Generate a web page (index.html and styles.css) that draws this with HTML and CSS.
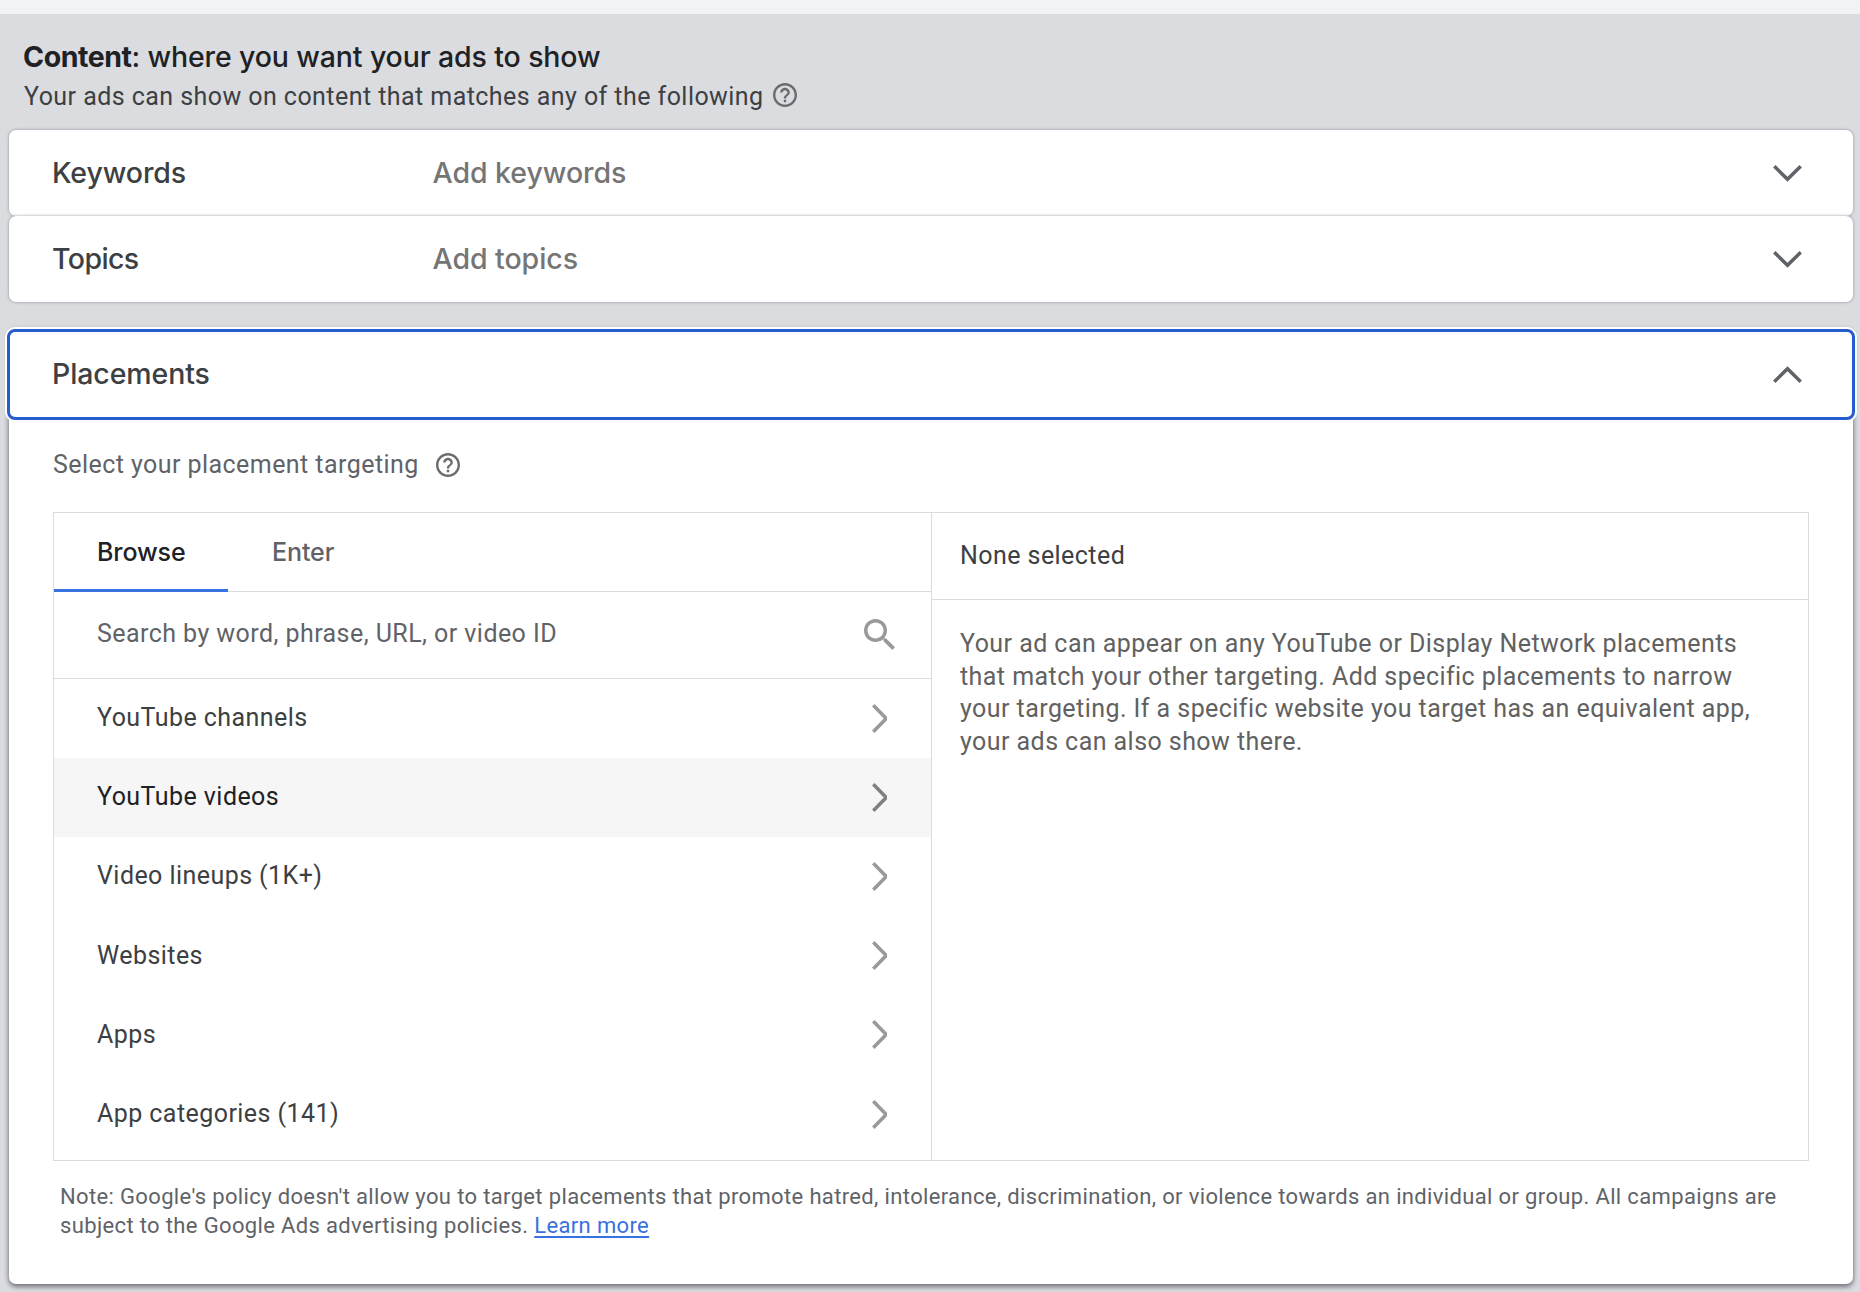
FILE: index.html
```html
<!DOCTYPE html>
<html lang="en">
<head>
<meta charset="utf-8">
<title>Content targeting</title>
<link rel="stylesheet" href="styles.css">
</head>
<body>
<svg class="defs" width="0" height="0" aria-hidden="true">
  <symbol id="help" viewBox="2 2 20 20"><path d="M11 18h2v-2h-2v2zm1-16C6.48 2 2 6.48 2 12s4.480 10 10 10 10-4.480 10-10S17.520 2 12 2zm0 18c-4.410 0-8-3.590-8-8s3.590-8 8-8 8 3.590 8 8-3.590 8-8 8zm0-14c-2.210 0-4 1.790-4 4h2c0-1.100.9-2 2-2s2 .9 2 2c0 2-3 1.750-3 5h2c0-2.250 3-2.500 3-5 0-2.210-1.790-4-4-4z"/></symbol>
  <symbol id="search" viewBox="3 3 17.490 17.490"><path d="M15.500 14h-.79l-.28-.27C15.410 12.590 16 11.110 16 9.500 16 5.910 13.090 3 9.500 3S3 5.910 3 9.500 5.910 16 9.500 16c1.610 0 3.090-.59 4.230-1.570l.27.28v.79l5 4.990L20.490 19l-4.990-5zm-6 0C7.010 14 5 11.990 5 9.500S7.010 5 9.500 5 14 7.010 14 9.500 11.990 14 9.500 14z"/></symbol>
  <symbol id="down" viewBox="0 0 29 17"><path d="M1.300 1.300 14.500 14.300 27.700 1.300" fill="none" stroke="currentColor" stroke-width="3.500"/></symbol>
  <symbol id="up" viewBox="0 0 29 17"><path d="M1.300 15.700 14.500 2.700 27.700 15.700" fill="none" stroke="currentColor" stroke-width="3.500"/></symbol>
  <symbol id="next" viewBox="0 0 15 29"><path d="M1.300 1.300 14.200 14.500 1.300 27.700" fill="none" stroke="currentColor" stroke-width="3.500"/></symbol>
</svg>

<main class="page">
  <header class="intro">
    <h1 class="title"><b>Content</b>: where you want your ads to show</h1>
    <p class="subtitle"><span>Your ads can show on content that matches any of the following</span><svg class="help"><use href="#help"/></svg></p>
  </header>

  <section class="card row">
    <span class="name">Keywords</span><span class="hint">Add keywords</span>
    <svg class="arrow"><use href="#down"/></svg>
  </section>
  <section class="card row">
    <span class="name topics">Topics</span><span class="hint">Add topics</span>
    <svg class="arrow"><use href="#down"/></svg>
  </section>

  <section class="placements">
    <div class="focus row">
      <span class="name">Placements</span>
      <svg class="arrow"><use href="#up"/></svg>
    </div>
    <p class="prompt"><span>Select your placement targeting</span><svg class="help"><use href="#help"/></svg></p>

    <div class="picker">
      <div class="browse">
        <nav class="tabs"><span class="tab active">Browse</span><span class="tab">Enter</span></nav>
        <div class="search"><span>Search by word, phrase, URL, or video ID</span><svg class="glass"><use href="#search"/></svg></div>
        <ul class="list">
          <li>YouTube channels<svg class="next"><use href="#next"/></svg></li>
          <li class="hover">YouTube videos<svg class="next"><use href="#next"/></svg></li>
          <li>Video lineups (1K+)<svg class="next"><use href="#next"/></svg></li>
          <li>Websites<svg class="next"><use href="#next"/></svg></li>
          <li>Apps<svg class="next"><use href="#next"/></svg></li>
          <li>App categories (141)<svg class="next"><use href="#next"/></svg></li>
        </ul>
      </div>
      <div class="selected">
        <div class="count">None selected</div>
        <p class="about">Your ad can appear on any YouTube or Display Network placements<br>that match your other targeting. Add specific placements to narrow<br>your targeting. If a specific website you target has an equivalent app,<br>your ads can also show there.</p>
      </div>
    </div>

    <p class="note">Note: Google's policy doesn't allow you to target placements that promote hatred, intolerance, discrimination, or violence towards an individual or group. All campaigns are<br>subject to the Google Ads advertising policies. <a class="link">Learn more</a></p>
  </section>
</main>
</body>
</html>
```
FILE: styles.css
```css
* { box-sizing: border-box; }

body {
  margin: 0;
  background: #dadce0;
  color: #3c4043;
  font: 400 25px/32px Roboto, "Liberation Sans", sans-serif;
  letter-spacing: 0.44px;
}

h1, p, ul { margin: 0; padding: 0; }
svg { display: block; flex: none; fill: currentColor; }
.defs { position: absolute; }

.page {
  height: 1292px;
  overflow: hidden;
  border-top: 14px solid #f1f3f4;
  padding: 0 7px 0 9px;
}

.intro { height: 116px; padding: 24px 0 0 15px; }

.title, .name, .hint, .tab {
  font-family: Inter, Roboto, sans-serif;
  font-weight: 470;
  white-space: nowrap;
}

.title {
  color: #202124;
  font-size: 28.5px;
  line-height: 38px;
  letter-spacing: -0.13px;
}
.title b { margin-left: -1px; font-weight: 680; letter-spacing: -0.45px; }

.subtitle, .prompt { display: flex; align-items: center; white-space: nowrap; }
.subtitle { padding-top: 5px; gap: 9px; }
.subtitle .help { margin-top: -5px; }
.help { width: 24px; height: 24px; color: #6a6c6f; }

.row { display: flex; align-items: center; padding: 0 51px 0 43px; }
.card {
  height: 86px;
  background: #fff;
  border-radius: 7px;
  box-shadow: 0 0 3px rgba(60, 60, 80, 0.5);
}
.name { width: 380.5px; font-size: 28.5px; letter-spacing: -0.1px; }
.topics { letter-spacing: -0.6px; }
.hint { color: #757575; font-size: 28.5px; letter-spacing: -0.06px; }
.arrow { width: 29px; height: 17px; margin-left: auto; color: #5f6368; }

.placements {
  height: 955px;
  margin-top: 27px;
  background: #fff;
  border-radius: 7px;
  box-shadow: 0 3px 5px rgba(40, 40, 50, 0.5), 0 0 5px rgba(60, 60, 80, 0.3);
}
.focus {
  height: 91px;
  margin: 0 -2px;
  padding: 0 50px 1px 42px;
  border: 3.500px solid #265ccb;
  border-radius: 8px;
  box-shadow: 0 0 0 2px #fff;
  background: #fff;
}
.prompt { padding: 29px 0 0 44px; gap: 17px; color: #5f6368; }
.prompt .help { margin-top: -1px; }

.picker {
  display: grid;
  grid-template-columns: 878px 1fr;
  height: 649px;
  margin: 31px 44px 0;
  border: 1px solid #dadce0;
}
.browse { border-right: 1px solid #dadce0; }
.tabs { display: flex; height: 79px; border-bottom: 1px solid #dadce0; }
.tab {
  height: 79px;
  padding: 23px 44px 0;
  color: #5f6368;
  letter-spacing: -0.1px;
}
.active { width: 174px; padding-left: 43px; color: #202124; border-bottom: 3px solid #3871e0; }
.search {
  display: flex;
  align-items: center;
  justify-content: space-between;
  height: 87px;
  padding: 0 36px 2px 43px;
  border-bottom: 1px solid #dadce0;
  color: #5f6368;
}
.glass { width: 31px; height: 31px; color: #999; }
.list { list-style: none; }
.list li {
  display: flex;
  align-items: center;
  justify-content: space-between;
  height: 79.200px;
  padding: 0 44px 1px 43px;
}
.list .hover { background: #f6f6f6; color: #202124; }
.next { width: 15px; height: 29px; color: #999; }
.hover .next { color: #808080; }

.count { height: 87px; padding: 27px 28px 0; border-bottom: 1px solid #dadce0; }
.about { padding: 28px 28px 0; color: #616161; line-height: 32.600px; white-space: nowrap; }

.note {
  padding: 21px 0 0 51px;
  color: #5f6368;
  font-size: 22px;
  line-height: 29px;
  letter-spacing: 0.352px;
  white-space: nowrap;
}
.link { color: #3871e0; text-decoration: underline; text-decoration-thickness: 2px; text-underline-offset: 3px; }
```
